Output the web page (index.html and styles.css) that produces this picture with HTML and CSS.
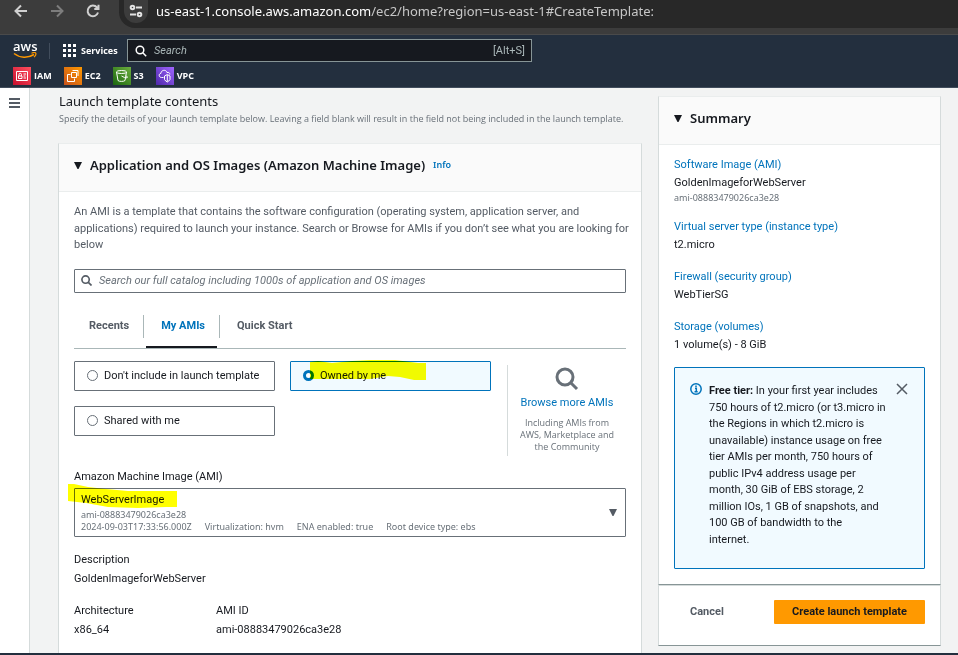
FILE: index.html
```html
<!DOCTYPE html>
<html lang="en">
<head>
<meta charset="utf-8">
<title>Create launch template | EC2</title>
<link rel="stylesheet" href="styles.css">
</head>
<body>
<div class="browser">
  <button class="browser-btn" aria-label="Back"><svg width="14" height="14" viewBox="0 0 14 14"><path d="M13 7H2M7 1.5 1.5 7 7 12.500" /></svg></button>
  <button class="browser-btn dim" aria-label="Forward"><svg width="14" height="14" viewBox="0 0 14 14"><path d="M1 7h11M7 1.500 12.500 7 7 12.500" /></svg></button>
  <button class="browser-btn" aria-label="Reload"><svg width="14" height="14" viewBox="0 0 14 14"><path d="M12 8.500A5.300 5.300 0 1 1 11 3.500L12.500 5M12.500 .8V5H8.300" /></svg></button>
  <div class="url">
    <span class="site"><svg width="14" height="14" viewBox="0 0 14 14"><circle cx="3.500" cy="3.500" r="1.800"/><path d="M7 3.500h6M1 10.500h6"/><circle cx="10.500" cy="10.500" r="1.800"/></svg></span>
    <span class="address"><b>us-east-1.console.aws.amazon.com</b>/ec2/home?region=us-east-1#CreateTemplate:</span>
  </div>
</div>

<header class="nav">
  <div class="nav-row">
    <a class="logo" href="#" aria-label="AWS home"><span class="logo-text">aws</span><svg width="24" height="7" viewBox="0 0 24 7"><path d="M1 1.500C7 6.300 15 6.300 21 2.500" fill="none" stroke="#f90" stroke-width="1.500"/><path d="M18.500 1.200c2-.8 4-.6 4.300 0s-.5 2.700-1.800 4" fill="none" stroke="#f90" stroke-width="1.200"/></svg></a>
    <button class="services"><svg width="13" height="13" viewBox="0 0 13 13" fill="#fff"><path d="M0 0h3v3H0zM5 0h3v3H5zM10 0h3v3h-3zM0 5h3v3H0zM5 5h3v3H5zM10 5h3v3h-3zM0 10h3v3H0zM5 10h3v3H5zM10 10h3v3h-3z"/></svg>Services</button>
    <label class="nav-search"><svg width="12" height="12" viewBox="0 0 12 12"><circle cx="5" cy="5" r="3.800"/><path d="m7.800 7.800 3.400 3.400"/></svg><input type="text" placeholder="Search" aria-label="Search"><span>[Alt+S]</span></label>
  </div>
  <nav class="favorites">
    <a href="#"><svg class="red" width="18" height="18" viewBox="0 0 18 18"><path d="M3.500 4.500h11v9h-11zM6 9V7.500a1.200 1.200 0 0 1 2.400 0V9M5.500 9h3.500v2.500H5.500zM10.500 7h2.500M10.500 9h2M10.500 11h2.500"/></svg>IAM</a>
    <a href="#"><svg class="orange" width="18" height="18" viewBox="0 0 18 18"><path d="M7.500 5.500h5v5h-5zM8.500 3.500h5.500v5.500M6.500 7.500h-3v7h7v-3"/></svg>EC2</a>
    <a href="#"><svg class="green" width="18" height="18" viewBox="0 0 18 18"><ellipse cx="8.500" cy="5" rx="5" ry="1.500"/><path d="M3.500 5 5 13.500c1 1.200 6 1.200 7 0L13.500 5M8.500 9c2 1.200 4 2 5.500 1.800 1-.3-.2-1.600-1.200-2.300"/></svg>S3</a>
    <a href="#"><svg class="purple" width="18" height="18" viewBox="0 0 18 18"><path d="M7.500 10.500H5.500c-3 0-3-4-.5-4.200 0-3.300 5-4.300 6-.8 2-.5 2.800.5 2.800 2M8.500 9l2.800-1.500L14 9v3.500c-.5 1.200-1.800 2-2.700 2.500-1-.5-2.300-1.300-2.800-2.500zM11.300 8v6.500"/></svg>VPC</a>
  </nav>
</header>

<div class="shell">
  <div class="rail"><button aria-label="Open navigation"><svg width="11" height="10" viewBox="0 0 11 10"><path d="M0 1h11M0 5h11M0 9h11"/></svg></button></div>
  <div class="page">
    <main>
      <h1>Launch template contents</h1>
      <p class="lead">Specify the details of your launch template below. Leaving a field blank will result in the field not being included in the launch template.</p>

      <section class="card">
        <div class="card-head"><svg class="caret" width="8" height="7" viewBox="0 0 8 7"><path d="M0 0h8L4.500 7h-1z"/></svg><h2>Application and OS Images (Amazon Machine Image)</h2><a class="info" href="#">Info</a></div>
        <div class="card-body">
          <p class="intro">An AMI is a template that contains the software configuration (operating system, application server, and applications) required to launch your instance. Search or Browse for AMIs if you don’t see what you are looking for below</p>
          <label class="search"><svg width="11" height="11" viewBox="0 0 12 12"><circle cx="5" cy="5" r="4"/><path d="m8 8 3.500 3.500"/></svg><input type="text" placeholder="Search our full catalog including 1000s of application and OS images" aria-label="Search catalog"></label>

          <ul class="tabs" role="tablist">
            <li><button role="tab">Recents</button></li>
            <li><button role="tab" class="active" aria-selected="true">My AMIs</button></li>
            <li><button role="tab">Quick Start</button></li>
          </ul>

          <div class="choices">
            <div class="tiles">
              <label class="tile"><input type="radio" name="source">Don't include in launch template</label>
              <label class="tile selected"><input type="radio" name="source" checked>Owned by me
                <svg class="marker marker-owned" width="116" height="20" viewBox="0 0 116 20"><path d="M0 2 8 1 22 3 42 1 60 0 85 0 108 3 116 3V20H104L90 17 78 16 60 19H0z"/></svg>
              </label>
              <label class="tile"><input type="radio" name="source">Shared with me</label>
            </div>
            <div class="browse">
              <svg width="24" height="24" viewBox="0 0 24 24"><circle cx="10" cy="10" r="8"/><path d="m15.500 15.500 6.500 6.500"/></svg>
              <a href="#">Browse more AMIs</a>
              <p>Including AMIs from AWS, Marketplace and the Community</p>
            </div>
          </div>

          <label class="field-label" for="ami">Amazon Machine Image (AMI)</label>
          <div class="ami">
            <select id="ami"><option>WebServerImage</option></select>
            <div class="ami-meta">
              <div>ami-08883479026ca3e28</div>
              <div class="ami-facts"><span>2024-09-03T17:33:56.000Z</span><span>Virtualization: hvm</span><span>ENA enabled: true</span><span>Root device type: ebs</span></div>
            </div>
            <svg class="ami-caret" width="8" height="7" viewBox="0 0 8 7"><path d="M0 0h8L4.500 7h-1z"/></svg>
            <svg class="marker marker-ami" width="110" height="24" viewBox="0 0 110 24"><path d="M0 0H6L20 3 38 5 60 7H109V23H98L70 24 40 23 18 19 0 17z"/></svg>
          </div>

          <dl class="details">
            <div class="wide"><dt>Description</dt><dd>GoldenImageforWebServer</dd></div>
            <div><dt>Architecture</dt><dd>x86_64</dd></div>
            <div><dt>AMI ID</dt><dd>ami-08883479026ca3e28</dd></div>
          </dl>
        </div>
      </section>
    </main>

    <aside>
      <section class="card summary">
        <div class="card-head"><svg class="caret" width="8" height="7" viewBox="0 0 8 7"><path d="M0 0h8L4.500 7h-1z"/></svg><h2>Summary</h2></div>
        <div class="summary-body">
          <dl>
            <div><dt><a href="#">Software Image (AMI)</a></dt><dd>GoldenImageforWebServer</dd><dd class="small">ami-08883479026ca3e28</dd></div>
            <div><dt><a href="#">Virtual server type (instance type)</a></dt><dd>t2.micro</dd></div>
            <div><dt><a href="#">Firewall (security group)</a></dt><dd>WebTierSG</dd></div>
            <div><dt><a href="#">Storage (volumes)</a></dt><dd>1 volume(s) - 8 GiB</dd></div>
          </dl>
          <div class="alert">
            <svg width="12" height="12" viewBox="0 0 12 12"><circle cx="6" cy="6" r="5.200"/><path d="M5 5.300h1.300V8.500M4.500 8.700h3.200M6 2.500v1.500"/></svg>
            <p><strong>Free tier:</strong> In your first year includes 750 hours of t2.micro (or t3.micro in the Regions in which t2.micro is unavailable) instance usage on free tier AMIs per month, 750 hours of public IPv4 address usage per month, 30 GiB of EBS storage, 2 million IOs, 1 GB of snapshots, and 100 GB of bandwidth to the<br>internet.</p>
            <button aria-label="Dismiss"><svg width="12" height="12" viewBox="0 0 12 12"><path d="m1 1 10 10M11 1 1 11"/></svg></button>
          </div>
        </div>
      </section>
      <div class="actions">
        <button class="link">Cancel</button>
        <button class="primary">Create launch template</button>
      </div>
    </aside>
  </div>
</div>
<div class="footer"></div>
</body>
</html>
```
FILE: styles.css
```css
* { box-sizing: border-box; }
body {
  margin: 0;
  height: 100vh;
  overflow: hidden;
  display: flex;
  flex-direction: column;
  font: 11px/18px Roboto, "Noto Sans", sans-serif;
  color: #16191f;
  background: #f2f3f3;
}
h1, h2, p, dl, dd, ul { margin: 0; padding: 0; }
h1, h2, .info, .small, .ami-meta { font-family: "Noto Sans", "Open Sans", sans-serif; }
.lead, .nav, .browse p { font-family: "Open Sans", "Noto Sans", sans-serif; }
a { color: #0073bb; text-decoration: none; }
button { font: inherit; border: 0; padding: 0; background: none; color: inherit; }
input, select { font: inherit; color: inherit; }
svg { flex: none; display: block; }

.browser {
  flex: none;
  display: flex;
  align-items: flex-start;
  gap: 22px;
  height: 35px;
  padding-left: 14px;
  background: #3c3c3c;
  border-bottom: 1px solid #4a4a4a;
}
.browser-btn { padding-top: 4px; }
.browser-btn svg { fill: none; stroke: #d0d0d0; stroke-width: 2; }
.browser-btn.dim svg { stroke: #7d7d7d; }
.url {
  flex: 1;
  display: flex;
  gap: 8px;
  height: 28px;
  margin-left: -3px;
  padding-left: 5px;
  background: #282828;
  border-bottom-left-radius: 16px;
}
.site { width: 24px; height: 23px; padding: 4px 5px; background: #3c3c3c; border-radius: 0 0 12px 12px; }
.site svg { fill: none; stroke: #e3e3e3; stroke-width: 2; }
.address { font: 13px/23px "Noto Sans", sans-serif; color: #c7c7c7; white-space: nowrap; }
.address b { font-weight: 400; color: #fff; }

.nav { flex: none; height: 53px; background: #232f3e; border-bottom: 1px solid #414d5c; color: #fff; }
.nav-row { display: flex; align-items: center; height: 31px; padding-left: 13px; }
.logo { display: flex; flex-direction: column; width: 37px; height: 16px; border-right: 1px solid #414d5c; color: #fff; }
.logo-text { height: 9px; font: 600 13px/7px "Open Sans", sans-serif; }
.services { display: flex; align-items: center; gap: 5px; margin-left: 13px; width: 52px; font: 700 9px/18px "Open Sans", sans-serif; }
.nav-search {
  display: flex;
  align-items: center;
  width: 405px;
  height: 23px;
  margin-left: 12px;
  padding: 0 6px 0 7px;
  gap: 7px;
  background: #16191f;
  border: 1px solid #879596;
}
.nav-search svg { fill: none; stroke: #fff; stroke-width: 1.500; }
.nav-search input { flex: 1; min-width: 0; border: 0; padding: 0; background: none; font: 11px/18px Roboto, sans-serif; }
.nav-search input::placeholder { color: #aab7b8; font-style: italic; opacity: 1; }
.nav-search span { color: #aab7b8; font: 11px/18px Roboto, sans-serif; }
.favorites { display: flex; gap: 12px; padding-left: 13px; }
.favorites a { display: flex; align-items: center; gap: 3px; height: 19px; color: #fff; font-size: 9px; font-weight: 700; }
.favorites svg { fill: none; stroke: #fff; }
.red { background: linear-gradient(45deg, #c8102e, #ff4f5e); }
.orange { background: linear-gradient(45deg, #c8511b, #f90); }
.green { background: linear-gradient(45deg, #1b660f, #6cae3e); }
.purple { background: linear-gradient(45deg, #4d27aa, #a166ff); }

.shell { flex: 1; min-height: 0; display: flex; overflow: hidden; }
.rail { flex: none; width: 30px; padding: 8px 0 0 9px; background: #fff; border-right: 1px solid #d5dbdb; }
.rail svg { stroke: #545b64; stroke-width: 2; }
.page { flex: 1; display: grid; grid-template-columns: minmax(0, 584fr) minmax(0, 283fr); gap: 16px; padding: 4px 17px 0 28px; }
h1, .lead { padding-left: 1px; }
h1 { font-size: 13px; font-weight: 400; line-height: 18px; }
.lead { font-size: 9px; line-height: 17px; color: #687078; white-space: nowrap; }
.card { background: #fff; border: 1px solid #d5dbdb; border-top-color: #eaeded; }
main .card { margin-top: 16px; height: 600px; }
.card-head { display: flex; align-items: center; height: 48px; padding: 0 15px 5px; background: #fafafa; border-bottom: 1px solid #eaeded; }
.caret { fill: #16191f; margin-right: 8px; }
h2 { font-size: 13px; font-weight: 600; }
.info { margin-left: 8px; font-size: 9px; font-weight: 600; }
.card-body { padding: 12px 15px; }
.intro { margin-right: -8px; line-height: 1.5; color: #545b64; }
.search { display: flex; align-items: center; gap: 7px; height: 24px; margin-top: 15px; padding-left: 6px; border: 1px solid #687078; border-radius: 1px; }
.search svg { fill: none; stroke: #545b64; stroke-width: 1.800; }
.search input { flex: 1; border: 0; padding: 0; background: none; }
.search input::placeholder { color: #687078; font-style: italic; opacity: 1; }

.tabs { display: flex; list-style: none; margin-top: 22px; border-bottom: 1px solid #aab7b8; }
.tabs li { display: flex; gap: 2px; }
.tabs li:not(:last-child)::after { content: ""; width: 1px; height: 23px; background: #aab7b8; }
.tabs li + li { margin-left: 2px; }
.tabs button { height: 33px; padding: 0 12px 9px 15px; font-weight: 700; color: #545b64; border-bottom: 2px solid transparent; }
.tabs .active { color: #0073bb; border-bottom-color: #16191f; }

.choices { display: flex; gap: 16px; margin-top: 12px; }
.tiles { flex: 1; display: grid; grid-template-columns: 1fr 1fr; grid-auto-rows: 30px; gap: 15px; }
.tile { position: relative; display: flex; align-items: center; gap: 6px; padding-left: 12px; border: 1px solid #687078; border-radius: 1px; color: #16191f; white-space: nowrap; }
.tile input { appearance: none; width: 11px; height: 11px; margin: 0; background: #fff; border: 1px solid #687078; border-radius: 50%; }
.tile input:checked { border: 3px solid #0073bb; }
.tile.selected { background: #f1faff; border-color: #0073bb; }
.marker { position: absolute; fill: #ff0; mix-blend-mode: multiply; pointer-events: none; }
.marker-owned { left: 19px; top: -2px; }
.marker-ami { left: -6px; top: -4px; }
.browse { width: 119px; height: 91px; margin-top: 4px; padding: 2px 10px 0; border-left: 1px solid #d5dbdb; display: flex; flex-direction: column; align-items: center; text-align: center; white-space: nowrap; }
.browse svg { fill: none; stroke: #687078; stroke-width: 3; }
.browse a { margin-top: 3px; }
.browse p { margin-top: 5px; font-size: 9px; line-height: 12px; color: #687078; white-space: normal; }

.field-label { display: block; margin-top: 12px; }
.ami { position: relative; margin-top: 2px; }
.ami select { display: block; appearance: none; width: 100%; height: 49px; padding: 1px 6px 25px; background: #fff; border: 1px solid #687078; border-radius: 1px; }
.ami-meta { position: absolute; left: 7px; bottom: 4px; font-size: 9px; line-height: 12px; color: #687078; pointer-events: none; }
.ami-facts { display: flex; gap: 13px; white-space: nowrap; }
.ami-caret { position: absolute; right: 9px; top: 21px; fill: #545b64; pointer-events: none; }
.details { display: grid; grid-template-columns: 142px 1fr; row-gap: 13px; margin-top: 13px; }
.details .wide { grid-column: 1 / -1; }
.details dt, .details dd { line-height: 19px; }

aside { padding-top: 4px; }
.summary-body { padding: 11px 15px 15px; }
.summary dl { display: grid; gap: 14px; }
.summary .small { font-size: 9px; line-height: 12px; color: #687078; }
.alert { display: flex; gap: 7px; height: 202px; margin-top: 13px; padding: 15px; background: #f1faff; border: 1px solid #0073bb; border-radius: 1px; }
.alert p { flex: 1; line-height: 1.5; }
.alert > svg { fill: none; stroke: #0073bb; stroke-width: 1.500; }
.alert button { align-self: flex-start; padding: 0 1px 0 0; }
.alert button svg { fill: none; stroke: #545b64; stroke-width: 1.500; }
.summary { border-bottom-color: #879596; }
.actions { display: flex; align-items: center; justify-content: space-between; height: 61px; padding: 0 15px 8px 31px; background: #fff; border: 1px solid #d5dbdb; border-bottom-color: #879596; }
.actions button { height: 24px; font-weight: 700; }
.link { color: #545b64; }
.actions .primary { padding: 0 18px; background: #f90; border-radius: 1px; }
.footer { flex: none; height: 2px; background: #232f3e; }
```
